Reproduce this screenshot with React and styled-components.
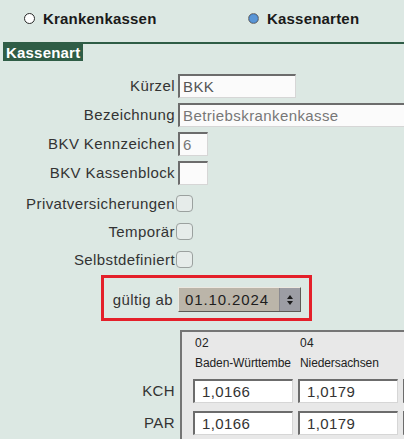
import React from 'react';
import styled, { createGlobalStyle } from 'styled-components';

const Global = createGlobalStyle`
  html, body { margin: 0; padding: 0; background: #dce8e3; }
  body { font-family: "Liberation Sans", Arial, sans-serif; }
  * { box-sizing: border-box; }
`;

const Page = styled.div`
  position: relative;
  width: 404px;
  height: 439px;
  overflow: hidden;
  background: #dce8e3;
  color: #333;
  font-size: 15px;
  letter-spacing: 0.4px;
`;

const RadioBar = styled.div`
  display: flex;
  align-items: center;
  height: 36px;
  padding-left: 24px;
`;

const RadioItem = styled.label`
  display: flex;
  align-items: center;
  flex: none;
  width: ${p => p.$w}px;
  font-weight: bold;
  font-size: 15px;
  letter-spacing: 0.2px;
  color: #1a1a1a;
`;

const RadioDot = styled.span`
  width: 11px;
  height: 11px;
  border-radius: 50%;
  margin-right: 8px;
  border: 1px solid ${p => (p.$on ? '#707070' : '#2a2a2a')};
  background: ${p => (p.$on ? 'radial-gradient(circle, #5a96d6 0 3.5px, #3d78bd 4.5px)' : '#fff')};
`;

const SectionHead = styled.div`
  margin: 6px 0 0 3px;
  border-top: 2px solid #2f5d46;
  height: 19px;
`;

const SectionTitle = styled.span`
  display: inline-block;
  height: 17px;
  line-height: 17px;
  background: #2f5d46;
  color: #fff;
  font-weight: bold;
  font-size: 15px;
  letter-spacing: 0.2px;
  padding: 0 3px 0 3px;
`;

const Form = styled.div`
  display: flex;
  flex-direction: column;
  margin-top: 10px;
`;

const Row = styled.div`
  display: flex;
  align-items: center;
  height: ${p => p.$h}px;
  margin-top: ${p => p.$mt || 0}px;
`;

const Label = styled.div`
  flex: none;
  width: ${p => p.$w || 175}px;
  text-align: right;
  white-space: nowrap;
  color: #333;
  margin-right: ${p => p.$gap ?? 3}px;
`;

const TextField = styled.input`
  width: ${p => p.$w}px;
  height: 24px;
  flex: none;
  padding: 0 0 0 3px;
  font-family: "Liberation Sans", Arial, sans-serif;
  font-size: 15px;
  letter-spacing: 0.4px;
  color: ${p => p.$light ? '#777' : '#555'};
  background: #fbfbfb;
  border-top: 2px solid #6c6c6c;
  border-left: 2px solid #6c6c6c;
  border-right: 1px solid #d6d6d6;
  border-bottom: 1px solid #d6d6d6;
  outline: none;
`;

const CheckBox = styled.span`
  flex: none;
  width: 17px;
  height: 17px;
  margin-left: -1px;
  border-radius: 4px;
  border: 1.5px solid #9ba19f;
  background: #e6ecea;
`;

const Select = styled.div`
  display: flex;
  flex: none;
  width: 123px;
  height: 25px;
  border-top: 1px solid #ece8e0;
  border-left: 1px solid #ece8e0;
  border-right: 1px solid #5c5a55;
  border-bottom: 1px solid #5c5a55;
  background: #bbb5a9;
`;

const SelectValue = styled.div`
  flex: 1;
  padding-left: 6px;
  line-height: 23px;
  color: #1e1e1e;
  letter-spacing: 0.9px;
`;

const SelectArrow = styled.div`
  width: 21px;
  background: #9c9da4;
  border-left: 1px solid #8a8a90;
  display: flex;
  align-items: center;
  justify-content: center;
`;

const Highlight = styled.div`
  position: absolute;
  left: 101px;
  top: 275px;
  width: 211px;
  height: 46px;
  border: 3px solid #e4202a;
  pointer-events: none;
`;

const Bottom = styled.div`
  display: flex;
  margin-top: 18px;
  height: 120px;
`;

const SideLabels = styled.div`
  flex: none;
  width: 180px;
  padding-top: 49px;
  display: flex;
  flex-direction: column;
  gap: 8px;
`;

const SideLabel = styled.div`
  width: 175px;
  height: 24px;
  line-height: 24px;
  text-align: right;
`;

const Panel = styled.div`
  flex: none;
  width: 330px;
  background: #e8e8e8;
  border-top: 2px solid #757575;
  border-left: 2px solid #757575;
  padding-left: 11px;
  display: grid;
  grid-template-columns: repeat(3, 100px);
  grid-template-rows: 22px 18px 24px 24px;
  column-gap: 5px;
  align-content: start;
`;

const Code = styled.div`
  font-size: 12px;
  letter-spacing: ${p => p.$ls}px;
  line-height: ${p => p.$lh}px;
  padding-left: 2px;
  color: #222;
  white-space: nowrap;
  overflow: hidden;
`;

const CellField = styled(TextField)`
  width: 100px;
  margin-top: ${p => p.$mt}px;
  padding-left: 7px;
  background: #fff;
  color: #333;
`;

const Arrows = () => (
  <svg width="8" height="12" viewBox="0 0 8 12">
    <path d="M4 1 L7 5 L1 5 Z" fill="#1a1a1a" />
    <path d="M4 11 L7 7 L1 7 Z" fill="#1a1a1a" />
  </svg>
);

const columns = [
  { code: '02', name: 'Baden-Württembe', kch: '1,0166', par: '1,0166' },
  { code: '04', name: 'Niedersachsen', kch: '1,0179', par: '1,0179' },
  { code: '', name: '', kch: '', par: '' },
];

export default function App() {
  return (
    <Page>
      <Global />
      <RadioBar>
        <RadioItem $w={224}><RadioDot />Krankenkassen</RadioItem>
        <RadioItem $w={140}><RadioDot $on />Kassenarten</RadioItem>
      </RadioBar>
      <SectionHead>
        <SectionTitle>Kassenart</SectionTitle>
      </SectionHead>
      <Form>
        <Row $h={29}>
          <Label>Kürzel</Label>
          <TextField $w={118} defaultValue="BKK" readOnly />
        </Row>
        <Row $h={29}>
          <Label>Bezeichnung</Label>
          <TextField $w={240} defaultValue="Betriebskrankenkasse" readOnly $light />
        </Row>
        <Row $h={29}>
          <Label>BKV Kennzeichen</Label>
          <TextField $w={30} defaultValue="6" readOnly $light />
        </Row>
        <Row $h={29}>
          <Label>BKV Kassenblock</Label>
          <TextField $w={30} defaultValue="" readOnly />
        </Row>
        <Row $h={28} $mt={2}>
          <Label $gap={2}>Privatversicherungen</Label>
          <CheckBox />
        </Row>
        <Row $h={28}>
          <Label $gap={2}>Temporär</Label>
          <CheckBox />
        </Row>
        <Row $h={28}>
          <Label $gap={2}>Selbstdefiniert</Label>
          <CheckBox />
        </Row>
        <Row $h={25} $mt={14}>
          <Label $gap={5} $w={173}>gültig ab</Label>
          <Select>
            <SelectValue>01.10.2024</SelectValue>
            <SelectArrow><Arrows /></SelectArrow>
          </Select>
        </Row>
      </Form>
      <Bottom>
        <SideLabels>
          <SideLabel>KCH</SideLabel>
          <SideLabel>PAR</SideLabel>
        </SideLabels>
        <Panel>
          {columns.map((c, i) => <Code key={'c' + i} $lh={22} $ls={0.3}>{c.code}</Code>)}
          {columns.map((c, i) => <Code key={'n' + i} $lh={18} $ls={-0.1}>{c.name}</Code>)}
          {columns.map((c, i) => <CellField key={'k' + i} $mt={7} defaultValue={c.kch} readOnly />)}
          {columns.map((c, i) => <CellField key={'p' + i} $mt={15} defaultValue={c.par} readOnly />)}
        </Panel>
      </Bottom>
      <Highlight />
    </Page>
  );
}
